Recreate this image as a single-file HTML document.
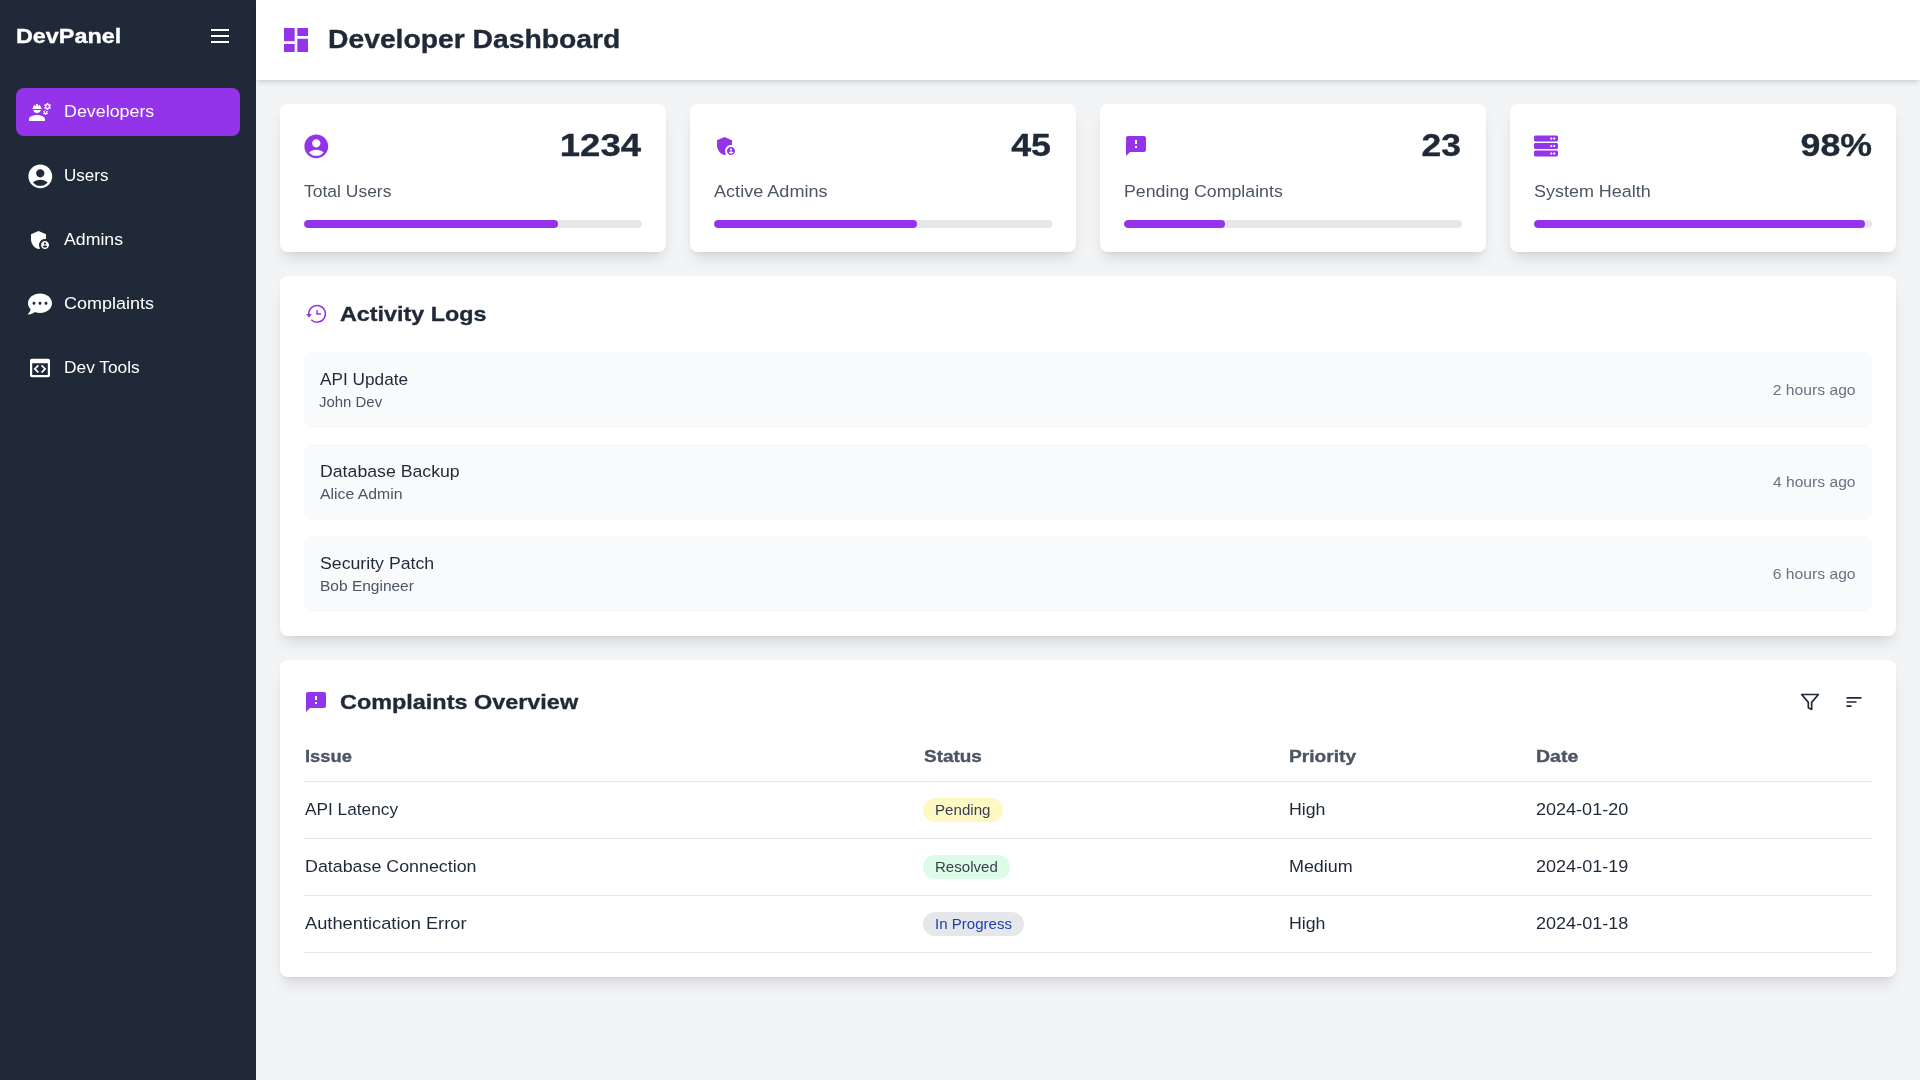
<!DOCTYPE html>
<html><head><meta charset="utf-8"><title>Developer Dashboard</title>
<style>
*{box-sizing:border-box;margin:0;padding:0}
html,body{width:1920px;height:1080px;overflow:hidden}
body{font-family:"Liberation Sans",sans-serif;background:#f3f4f6;color:#1f2937;position:relative}
.abs{position:absolute}
.sb{position:absolute;left:0;top:0;width:256px;height:1080px;background:#1f2937;color:#fff}
.nav{position:absolute;left:16px;width:224px;height:48px;border-radius:8px}
.nav.active{background:#9333ea}
.nt{position:absolute;left:64px;height:24px;line-height:24px;white-space:nowrap}
.hdr{position:absolute;left:256px;top:0;width:1664px;height:80px;background:#fff;box-shadow:0 4px 6px -1px rgba(0,0,0,.1),0 2px 4px -2px rgba(0,0,0,.1)}
.card{position:absolute;background:#fff;border-radius:8px;box-shadow:0 10px 15px -3px rgba(0,0,0,.1),0 4px 6px -4px rgba(0,0,0,.1)}
.ln{position:absolute;white-space:nowrap}
.track{position:absolute;height:8px;background:#e5e7eb;border-radius:9999px;overflow:hidden}
.fill{height:8px;background:#9333ea;border-radius:9999px}
.item{position:absolute;left:24px;width:1568px;height:76px;background:#f9fafb;border-radius:8px}
.rule{position:absolute;left:24px;width:1568px;height:1px;background:#e5e7eb}
.badge{position:absolute;height:24px;line-height:24px;border-radius:9999px;padding:0 12px;white-space:nowrap}
</style></head><body>

<div class="sb">
<div class="ln" style="left:16px;top:22px;line-height:28px;height:28px"><span style="display:inline-block;-webkit-text-stroke:0.35px currentColor;font-size:21.00px;font-weight:700;transform:scaleX(1.1127);transform-origin:left center;will-change:transform;margin-left:0.273px;">DevPanel</span></div>
<div class="abs" style="left:211px;top:29px;width:18px;height:2px;background:#fff"></div>
<div class="abs" style="left:211px;top:35px;width:18px;height:2px;background:#fff"></div>
<div class="abs" style="left:211px;top:41px;width:18px;height:2px;background:#fff"></div>
<div class="nav active" style="top:88px"></div>
<div class="nt" style="top:100px"><span style="display:inline-block;font-size:16.80px;font-weight:400;transform:scaleX(1.0637);transform-origin:left center;will-change:transform;margin-left:0.086px;">Developers</span></div>
<div class="nav" style="top:152px"></div>
<div class="nt" style="top:164px"><span style="display:inline-block;font-size:16.80px;font-weight:400;transform:scaleX(1.0152);transform-origin:left center;will-change:transform;margin-left:0.078px;">Users</span></div>
<div class="nav" style="top:216px"></div>
<div class="nt" style="top:228px"><span style="display:inline-block;font-size:16.80px;font-weight:400;transform:scaleX(1.0549);transform-origin:left center;will-change:transform;margin-left:0.076px;">Admins</span></div>
<div class="nav" style="top:280px"></div>
<div class="nt" style="top:292px"><span style="display:inline-block;font-size:16.80px;font-weight:400;transform:scaleX(1.0710);transform-origin:left center;will-change:transform;margin-left:-0.020px;">Complaints</span></div>
<div class="nav" style="top:344px"></div>
<div class="nt" style="top:356px"><span style="display:inline-block;font-size:16.80px;font-weight:400;transform:scaleX(1.0324);transform-origin:left center;will-change:transform;margin-left:0.129px;">Dev Tools</span></div>
<svg width="24" height="24" viewBox="0 0 24 24" style="position:absolute;left:28px;top:100px" fill="#fff"><path d="M9 15c-2.67 0-8 1.34-8 4v2h16v-2c0-2.66-5.33-4-8-4zM4.74 9h8.53c.27 0 .49-.22.49-.49v-.02c0-.27-.22-.49-.49-.49H13c0-1.48-.81-2.75-2-3.45v.95c0 .28-.22.5-.5.5s-.5-.22-.5-.5V4.14C9.68 4.06 9.35 4 9 4s-.68.06-1 .14V5.5c0 .28-.22.5-.5.5S7 5.78 7 5.5v-.95C5.81 5.25 5 6.52 5 8h-.26c-.27 0-.49.22-.49.49v.03c0 .26.22.48.49.48zM9 13c1.86 0 3.41-1.28 3.86-3H5.14c.45 1.72 2 3 3.86 3z"/><path fill-rule="evenodd" d="M21.98 6.23l.93-.83-.75-1.3-1.19.39c-.14-.11-.3-.2-.47-.27L20.25 3h-1.5l-.25 1.22c-.17.07-.33.16-.48.27l-1.18-.39-.75 1.3.93.83c-.02.17-.02.35 0 .52l-.93.85.75 1.3 1.2-.38c.13.1.28.19.43.26l.28 1.22h1.5l.27-1.22c.16-.07.3-.15.44-.26l1.19.38.75-1.3-.93-.85c.03-.19.02-.36.01-.52zM19.5 7.75c-.69 0-1.25-.56-1.25-1.25s.56-1.25 1.25-1.25 1.25.56 1.25 1.25-.56 1.25-1.25 1.25z"/><path fill-rule="evenodd" d="M19.4 10.79l-.85.28c-.1-.08-.21-.14-.33-.19l-.18-.88h-1.07l-.18.87c-.12.05-.24.12-.34.19l-.84-.28-.54.93.66.59c-.01.13-.01.25 0 .37l-.66.61.54.93.86-.27c.1.07.2.13.31.18l.18.88h1.07l.19-.87c.11-.05.22-.11.32-.18l.85.27.54-.93-.66-.61c.01-.13.01-.25 0-.37l.66-.59-.54-.93zM17.5 12.75c-.55 0-1-.45-1-1s.45-1 1-1 1 .45 1 1-.45 1-1 1z"/></svg>
<svg width="28.6" height="28.6" viewBox="0 0 24 24" style="position:absolute;left:25.7px;top:161.7px" fill="#fff"><path fill-rule="evenodd" d="M12 2C6.48 2 2 6.48 2 12s4.48 10 10 10 10-4.48 10-10S17.52 2 12 2zm0 4c1.93 0 3.5 1.57 3.5 3.5S13.93 13 12 13s-3.5-1.57-3.5-3.5S10.07 6 12 6zm0 14c-2.03 0-4.43-.82-6.14-2.88C7.55 15.8 9.68 15 12 15s4.45.8 6.14 2.12C16.43 19.18 14.03 20 12 20z"/></svg>
<svg width="24" height="24" viewBox="0 0 24 24" style="position:absolute;left:28px;top:228px" fill="#fff"><path d="M17 11c.34 0 .67.04 1 .09V6.27L10.5 3 3 6.27v4.91c0 4.54 3.2 8.79 7.5 9.82.55-.13 1.08-.32 1.6-.55-.69-.98-1.1-2.17-1.1-3.45 0-3.31 2.69-6 6-6z"/><path fill-rule="evenodd" d="M17 13c-2.21 0-4 1.79-4 4s1.79 4 4 4 4-1.79 4-4-1.79-4-4-4zm0 1.38c.62 0 1.12.51 1.12 1.12s-.51 1.12-1.12 1.12-1.12-.51-1.12-1.12.5-1.12 1.12-1.12zm0 5.37c-.93 0-1.74-.46-2.24-1.17.05-.72 1.51-1.08 2.24-1.08s2.19.36 2.24 1.08c-.5.71-1.31 1.17-2.24 1.17z"/></svg>
<svg width="24" height="24" viewBox="0 0 512 512" style="position:absolute;left:28px;top:292px" fill="#fff"><path fill-rule="evenodd" d="M256 32C114.6 32 0 125.1 0 240c0 49.6 21.4 95 57 130.7C44.5 421.1 2.7 466 2.2 466.5c-2.2 2.3-2.8 5.7-1.5 8.7S4.8 480 8 480c66.3 0 116-31.8 140.6-51.4 32.7 12.3 69 19.4 107.4 19.4 141.4 0 256-93.1 256-208S397.4 32 256 32zM128 272c-17.7 0-32-14.3-32-32s14.3-32 32-32 32 14.3 32 32-14.3 32-32 32zm128 0c-17.7 0-32-14.3-32-32s14.3-32 32-32 32 14.3 32 32-14.3 32-32 32zm128 0c-17.7 0-32-14.3-32-32s14.3-32 32-32 32 14.3 32 32-14.3 32-32 32z"/></svg>
<svg width="24" height="24" viewBox="0 0 24 24" style="position:absolute;left:28px;top:356px" fill="#fff">
<path fill-rule="evenodd" d="M3.9 2.74h16.2a1.9 1.9 0 0 1 1.9 1.9v14.72a1.9 1.9 0 0 1-1.9 1.9H3.9a1.9 1.9 0 0 1-1.9-1.9V4.64a1.9 1.9 0 0 1 1.9-1.9zM4.2 7.2v11.7h15.6V7.2z"/>
<path transform="translate(4.62 5.22) scale(0.64)" d="M9.4 16.6L4.8 12l4.6-4.6L8 6l-6 6 6 6 1.4-1.4z" stroke="#fff" stroke-width="1.0"/>
<path transform="translate(3.96 5.22) scale(0.64)" d="M14.6 16.6l4.6-4.6-4.6-4.6L16 6l6 6-6 6-1.4-1.4z" stroke="#fff" stroke-width="1.0"/>
</svg>
</div>
<div class="hdr">
<svg width="32" height="32" viewBox="0 0 24 24" style="position:absolute;left:24px;top:24px" fill="#9333ea"><path d="M3 13h8V3H3v10zm0 8h8v-6H3v6zm10 0h8V11h-8v10zm0-18v6h8V3h-8z"/></svg>
<div class="ln" style="left:72px;top:23px;line-height:32px;height:32px"><span style="display:inline-block;-webkit-text-stroke:0.35px currentColor;font-size:25.20px;font-weight:700;transform:scaleX(1.1227);transform-origin:left center;will-change:transform;margin-left:0.310px;">Developer Dashboard</span></div>
</div>
<div class="card" style="left:280px;top:104px;width:386px;height:148px">
<svg width="28.6" height="28.6" viewBox="0 0 24 24" style="position:absolute;left:21.6px;top:27.7px" fill="#9333ea"><path fill-rule="evenodd" d="M12 2C6.48 2 2 6.48 2 12s4.48 10 10 10 10-4.48 10-10S17.52 2 12 2zm0 4c1.93 0 3.5 1.57 3.5 3.5S13.93 13 12 13s-3.5-1.57-3.5-3.5S10.07 6 12 6zm0 14c-2.03 0-4.43-.82-6.14-2.88C7.55 15.8 9.68 15 12 15s4.45.8 6.14 2.12C16.43 19.18 14.03 20 12 20z"/></svg>
<div class="ln" style="right:24px;top:23px;line-height:36px;height:36px;text-align:right"><span style="display:inline-block;-webkit-text-stroke:0.35px currentColor;font-size:31.50px;font-weight:700;transform:scaleX(1.1601);transform-origin:right center;will-change:transform;margin-right:1.111px;">1234</span></div>
<div class="ln" style="left:24px;top:76px;line-height:24px;height:24px;color:#4b5563"><span style="display:inline-block;font-size:16.80px;font-weight:400;transform:scaleX(1.0415);transform-origin:left center;will-change:transform;margin-left:-0.434px;">Total Users</span></div>
<div class="track" style="left:24px;top:116px;width:338px"><div class="fill" style="width:75%"></div></div>
</div>
<div class="card" style="left:690px;top:104px;width:386px;height:148px">
<svg width="24" height="24" viewBox="0 0 24 24" style="position:absolute;left:24px;top:30px" fill="#9333ea"><path d="M17 11c.34 0 .67.04 1 .09V6.27L10.5 3 3 6.27v4.91c0 4.54 3.2 8.79 7.5 9.82.55-.13 1.08-.32 1.6-.55-.69-.98-1.1-2.17-1.1-3.45 0-3.31 2.69-6 6-6z"/><path fill-rule="evenodd" d="M17 13c-2.21 0-4 1.79-4 4s1.79 4 4 4 4-1.79 4-4-1.79-4-4-4zm0 1.38c.62 0 1.12.51 1.12 1.12s-.51 1.12-1.12 1.12-1.12-.51-1.12-1.12.5-1.12 1.12-1.12zm0 5.37c-.93 0-1.74-.46-2.24-1.17.05-.72 1.51-1.08 2.24-1.08s2.19.36 2.24 1.08c-.5.71-1.31 1.17-2.24 1.17z"/></svg>
<div class="ln" style="right:24px;top:23px;line-height:36px;height:36px;text-align:right"><span style="display:inline-block;-webkit-text-stroke:0.35px currentColor;font-size:31.50px;font-weight:700;transform:scaleX(1.1375);transform-origin:right center;will-change:transform;margin-right:1.080px;">45</span></div>
<div class="ln" style="left:24px;top:76px;line-height:24px;height:24px;color:#4b5563"><span style="display:inline-block;font-size:16.80px;font-weight:400;transform:scaleX(1.0775);transform-origin:left center;will-change:transform;margin-left:0.075px;">Active Admins</span></div>
<div class="track" style="left:24px;top:116px;width:338px"><div class="fill" style="width:60%"></div></div>
</div>
<div class="card" style="left:1100px;top:104px;width:386px;height:148px">
<svg width="24" height="24" viewBox="0 0 24 24" style="position:absolute;left:24px;top:30px" fill="#9333ea"><path fill-rule="evenodd" d="M20 2H4c-1.1 0-1.99.9-1.99 2L2 22l4-4h14c1.1 0 2-.9 2-2V4c0-1.1-.9-2-2-2zm-7 12h-2v-2h2v2zm0-4h-2V6h2v4z"/></svg>
<div class="ln" style="right:24px;top:23px;line-height:36px;height:36px;text-align:right"><span style="display:inline-block;-webkit-text-stroke:0.35px currentColor;font-size:31.50px;font-weight:700;transform:scaleX(1.1264);transform-origin:right center;will-change:transform;margin-right:1.124px;">23</span></div>
<div class="ln" style="left:24px;top:76px;line-height:24px;height:24px;color:#4b5563"><span style="display:inline-block;font-size:16.80px;font-weight:400;transform:scaleX(1.0572);transform-origin:left center;will-change:transform;margin-left:0.095px;">Pending Complaints</span></div>
<div class="track" style="left:24px;top:116px;width:338px"><div class="fill" style="width:30%"></div></div>
</div>
<div class="card" style="left:1510px;top:104px;width:386px;height:148px">
<svg width="24" height="24" viewBox="0 0 512 512" style="position:absolute;left:24px;top:29.6px" fill="#9333ea"><path fill-rule="evenodd" d="M480 160H32c-17.673 0-32-14.327-32-32V64c0-17.673 14.327-32 32-32h448c17.673 0 32 14.327 32 32v64c0 17.673-14.327 32-32 32zm-48-88c-13.255 0-24 10.745-24 24s10.745 24 24 24 24-10.745 24-24-10.745-24-24-24zm-64 0c-13.255 0-24 10.745-24 24s10.745 24 24 24 24-10.745 24-24-10.745-24-24-24zm112 248H32c-17.673 0-32-14.327-32-32v-64c0-17.673 14.327-32 32-32h448c17.673 0 32 14.327 32 32v64c0 17.673-14.327 32-32 32zm-48-88c-13.255 0-24 10.745-24 24s10.745 24 24 24 24-10.745 24-24-10.745-24-24-24zm-64 0c-13.255 0-24 10.745-24 24s10.745 24 24 24 24-10.745 24-24-10.745-24-24-24zm112 248H32c-17.673 0-32-14.327-32-32v-64c0-17.673 14.327-32 32-32h448c17.673 0 32 14.327 32 32v64c0 17.673-14.327 32-32 32zm-48-88c-13.255 0-24 10.745-24 24s10.745 24 24 24 24-10.745 24-24-10.745-24-24-24zm-64 0c-13.255 0-24 10.745-24 24s10.745 24 24 24 24-10.745 24-24-10.745-24-24-24z"/></svg>
<div class="ln" style="right:24px;top:23px;line-height:36px;height:36px;text-align:right"><span style="display:inline-block;-webkit-text-stroke:0.35px currentColor;font-size:31.50px;font-weight:700;transform:scaleX(1.1340);transform-origin:right center;will-change:transform;margin-right:-0.015px;">98%</span></div>
<div class="ln" style="left:24px;top:76px;line-height:24px;height:24px;color:#4b5563"><span style="display:inline-block;font-size:16.80px;font-weight:400;transform:scaleX(1.0701);transform-origin:left center;will-change:transform;margin-left:0.231px;">System Health</span></div>
<div class="track" style="left:24px;top:116px;width:338px"><div class="fill" style="width:98%"></div></div>
</div>
<div class="card" style="left:280px;top:276px;width:1616px;height:360px">
<svg width="24" height="24" viewBox="0 0 24 24" style="position:absolute;left:24px;top:26px" fill="none" stroke="#9333ea" stroke-width="1.5">
<path d="M4.75 12.2A8.35 8.35 0 1 1 7.2 17.75"/><path d="M13 8.2V12H17"/></svg>
<svg width="24" height="24" viewBox="0 0 24 24" style="position:absolute;left:24px;top:26px" fill="#9333ea"><path d="M2.2 12h5.5l-2.75 3.7z"/></svg>
<div class="ln" style="left:60px;top:24px;line-height:28px;height:28px"><span style="display:inline-block;-webkit-text-stroke:0.35px currentColor;font-size:21.00px;font-weight:700;transform:scaleX(1.1103);transform-origin:left center;will-change:transform;margin-left:-0.483px;">Activity Logs</span></div>
<div class="item" style="top:76px">
<div class="ln" style="left:16px;top:16px;line-height:24px;height:24px;color:#1f2937"><span style="display:inline-block;font-size:16.80px;font-weight:400;transform:scaleX(1.0266);transform-origin:left center;will-change:transform;margin-left:0.077px;">API Update</span></div>
<div class="ln" style="left:16px;top:40px;line-height:20px;height:20px;color:#4b5563"><span style="display:inline-block;font-size:14.70px;font-weight:400;transform:scaleX(1.0175);transform-origin:left center;will-change:transform;margin-left:-0.959px;">John Dev</span></div>
<div class="ln" style="right:16px;top:28px;line-height:20px;height:20px;color:#6b7280"><span style="display:inline-block;font-size:14.70px;font-weight:400;transform:scaleX(1.0671);transform-origin:right center;will-change:transform;margin-right:0.120px;">2 hours ago</span></div>
</div>
<div class="item" style="top:168px">
<div class="ln" style="left:16px;top:16px;line-height:24px;height:24px;color:#1f2937"><span style="display:inline-block;font-size:16.80px;font-weight:400;transform:scaleX(1.0544);transform-origin:left center;will-change:transform;margin-left:0.099px;">Database Backup</span></div>
<div class="ln" style="left:16px;top:40px;line-height:20px;height:20px;color:#4b5563"><span style="display:inline-block;font-size:14.70px;font-weight:400;transform:scaleX(1.0748);transform-origin:left center;will-change:transform;margin-left:0.066px;">Alice Admin</span></div>
<div class="ln" style="right:16px;top:28px;line-height:20px;height:20px;color:#6b7280"><span style="display:inline-block;font-size:14.70px;font-weight:400;transform:scaleX(1.0656);transform-origin:right center;will-change:transform;margin-right:0.121px;">4 hours ago</span></div>
</div>
<div class="item" style="top:260px">
<div class="ln" style="left:16px;top:16px;line-height:24px;height:24px;color:#1f2937"><span style="display:inline-block;font-size:16.80px;font-weight:400;transform:scaleX(1.0553);transform-origin:left center;will-change:transform;margin-left:0.242px;">Security Patch</span></div>
<div class="ln" style="left:16px;top:40px;line-height:20px;height:20px;color:#4b5563"><span style="display:inline-block;font-size:14.70px;font-weight:400;transform:scaleX(1.0550);transform-origin:left center;will-change:transform;margin-left:0.086px;">Bob Engineer</span></div>
<div class="ln" style="right:16px;top:28px;line-height:20px;height:20px;color:#6b7280"><span style="display:inline-block;font-size:14.70px;font-weight:400;transform:scaleX(1.0675);transform-origin:right center;will-change:transform;margin-right:0.119px;">6 hours ago</span></div>
</div>
</div>
<div class="card" style="left:280px;top:660px;width:1616px;height:317px">
<svg width="24" height="24" viewBox="0 0 24 24" style="position:absolute;left:24px;top:30px" fill="#9333ea"><path fill-rule="evenodd" d="M20 2H4c-1.1 0-1.99.9-1.99 2L2 22l4-4h14c1.1 0 2-.9 2-2V4c0-1.1-.9-2-2-2zm-7 12h-2v-2h2v2zm0-4h-2V6h2v4z"/></svg>
<div class="ln" style="left:60px;top:28px;line-height:28px;height:28px"><span style="display:inline-block;-webkit-text-stroke:0.35px currentColor;font-size:21.00px;font-weight:700;transform:scaleX(1.1148);transform-origin:left center;will-change:transform;margin-left:0.064px;">Complaints Overview</span></div>
<svg width="20" height="20" viewBox="0 0 24 24" style="position:absolute;left:1520px;top:32px" fill="none" stroke="#1f2937" stroke-width="2" stroke-linejoin="round"><polygon points="22 3 2 3 10 12.46 10 19 14 21 14 12.46 22 3"/></svg>
<svg width="20" height="20" viewBox="0 0 24 24" style="position:absolute;left:1563.7px;top:32px" fill="#1f2937"><path d="M3 18h6v-2H3v2zM3 6v2h18V6H3zm0 7h12v-2H3v2z"/></svg>
<div class="ln" style="left:25px;top:85px;line-height:24px;height:24px;color:#4b5563"><span style="display:inline-block;-webkit-text-stroke:0.35px currentColor;font-size:16.80px;font-weight:700;transform:scaleX(1.0911);transform-origin:left center;will-change:transform;margin-left:0.243px;">Issue</span></div>
<div class="ln" style="left:643px;top:85px;line-height:24px;height:24px;color:#4b5563"><span style="display:inline-block;-webkit-text-stroke:0.35px currentColor;font-size:16.80px;font-weight:700;transform:scaleX(1.1287);transform-origin:left center;will-change:transform;margin-left:0.591px;">Status</span></div>
<div class="ln" style="left:1009px;top:85px;line-height:24px;height:24px;color:#4b5563"><span style="display:inline-block;-webkit-text-stroke:0.35px currentColor;font-size:16.80px;font-weight:700;transform:scaleX(1.1420);transform-origin:left center;will-change:transform;margin-left:0.185px;">Priority</span></div>
<div class="ln" style="left:1256px;top:85px;line-height:24px;height:24px;color:#4b5563"><span style="display:inline-block;-webkit-text-stroke:0.35px currentColor;font-size:16.80px;font-weight:700;transform:scaleX(1.1608);transform-origin:left center;will-change:transform;margin-left:0.164px;">Date</span></div>
<div class="rule" style="top:121px"></div>
<div class="ln" style="left:25px;top:138px;line-height:24px;height:24px"><span style="display:inline-block;font-size:16.80px;font-weight:400;transform:scaleX(1.0280);transform-origin:left center;will-change:transform;margin-left:0.077px;">API Latency</span></div>
<div class="badge" style="left:643px;top:138px;width:79.97px;background:#fef9c3;color:#374151"><span style="display:inline-block;font-size:14.70px;font-weight:400;transform:scaleX(1.0294);transform-origin:left center;will-change:transform;margin-left:0.117px;">Pending</span></div>
<div class="ln" style="left:1009px;top:138px;line-height:24px;height:24px"><span style="display:inline-block;font-size:16.80px;font-weight:400;transform:scaleX(1.0572);transform-origin:left center;will-change:transform;margin-left:0.095px;">High</span></div>
<div class="ln" style="left:1256px;top:138px;line-height:24px;height:24px"><span style="display:inline-block;font-size:16.80px;font-weight:400;transform:scaleX(1.0746);transform-origin:left center;will-change:transform;margin-left:0.257px;">2024-01-20</span></div>
<div class="rule" style="top:178px"></div>
<div class="ln" style="left:25px;top:195px;line-height:24px;height:24px"><span style="display:inline-block;font-size:16.80px;font-weight:400;transform:scaleX(1.0628);transform-origin:left center;will-change:transform;margin-left:0.087px;">Database Connection</span></div>
<div class="badge" style="left:643px;top:195px;width:87.25px;background:#dcfce7;color:#374151"><span style="display:inline-block;font-size:14.70px;font-weight:400;transform:scaleX(1.0252);transform-origin:left center;will-change:transform;margin-left:0.122px;">Resolved</span></div>
<div class="ln" style="left:1009px;top:195px;line-height:24px;height:24px"><span style="display:inline-block;font-size:16.80px;font-weight:400;transform:scaleX(1.0670);transform-origin:left center;will-change:transform;margin-left:0.081px;">Medium</span></div>
<div class="ln" style="left:1256px;top:195px;line-height:24px;height:24px"><span style="display:inline-block;font-size:16.80px;font-weight:400;transform:scaleX(1.0752);transform-origin:left center;will-change:transform;margin-left:0.257px;">2024-01-19</span></div>
<div class="rule" style="top:235px"></div>
<div class="ln" style="left:25px;top:252px;line-height:24px;height:24px"><span style="display:inline-block;font-size:16.80px;font-weight:400;transform:scaleX(1.0892);transform-origin:left center;will-change:transform;margin-left:0.074px;">Authentication Error</span></div>
<div class="badge" style="left:643px;top:252px;width:101.20px;background:#e5e7eb;color:#1e40af"><span style="display:inline-block;font-size:14.70px;font-weight:400;transform:scaleX(1.0255);transform-origin:left center;will-change:transform;margin-left:-0.029px;">In Progress</span></div>
<div class="ln" style="left:1009px;top:252px;line-height:24px;height:24px"><span style="display:inline-block;font-size:16.80px;font-weight:400;transform:scaleX(1.0572);transform-origin:left center;will-change:transform;margin-left:0.095px;">High</span></div>
<div class="ln" style="left:1256px;top:252px;line-height:24px;height:24px"><span style="display:inline-block;font-size:16.80px;font-weight:400;transform:scaleX(1.0752);transform-origin:left center;will-change:transform;margin-left:0.257px;">2024-01-18</span></div>
<div class="rule" style="top:292px"></div>
</div>
</body></html>
